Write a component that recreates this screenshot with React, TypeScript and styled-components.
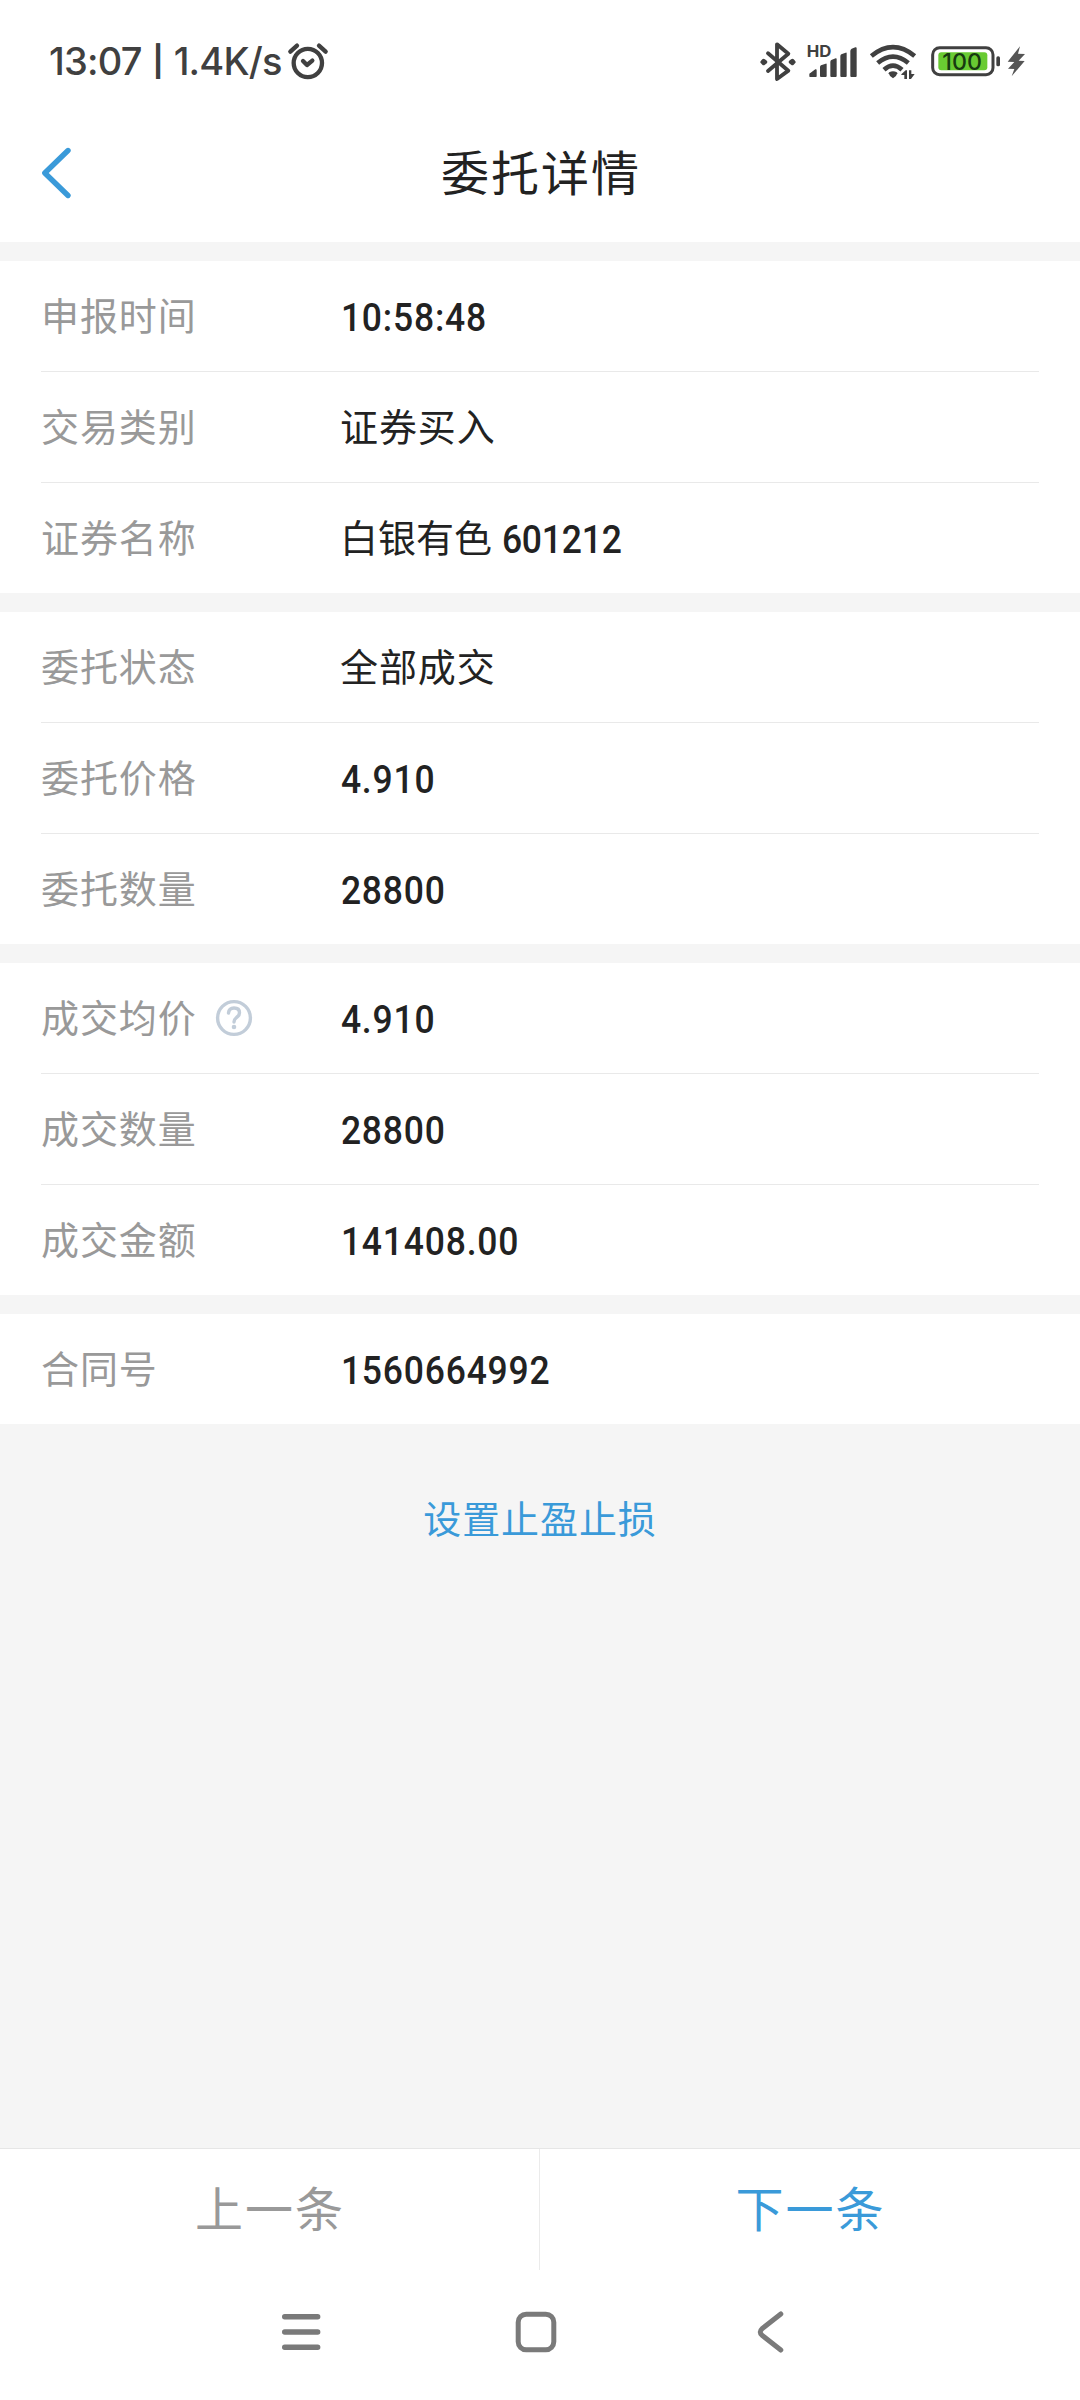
import React from "react";
import styled, { createGlobalStyle } from "styled-components";

const blue = "#3a9ad9";
const ink = "#404040";

const Global = createGlobalStyle`
  * { box-sizing: border-box; }
  body { margin: 0; background: #fff; }
`;

const Screen = styled.div`
  width: 1080px;
  height: 2400px;
  display: flex;
  flex-direction: column;
  background: #f5f5f5;
  font-family: "Noto Sans CJK SC", sans-serif;
  color: #222;
`;

const StatusBar = styled.header`
  height: 104px;
  padding: 18px 55px 0 49px;
  display: flex;
  align-items: center;
  background: #fff;
  color: ${ink};
`;

const Clock = styled.div`
  width: 239px;
  display: flex;
  align-items: center;
  font: 500 38px/44px Inter, sans-serif;
  letter-spacing: -0.8px;
`;

const Divider = styled.span`
  width: 32px;
  font-size: 30px;
  font-weight: 700;
  line-height: 44px;
  text-align: center;
`;

const Spacer = styled.div`
  flex: 1;
`;

const Glyph = styled.svg<{ $ml?: number; $mr?: number }>`
  display: block;
  flex: none;
  overflow: visible;
  margin-left: ${(p) => p.$ml ?? 0}px;
  margin-right: ${(p) => p.$mr ?? 0}px;
`;

const TitleBar = styled.div`
  height: 138px;
  display: grid;
  grid-template-columns: 1fr auto 1fr;
  align-items: center;
  padding: 0 41px;
  background: #fff;
`;

const BackButton = styled.button`
  display: flex;
  padding: 0;
  border: 0;
  background: none;
`;

const Title = styled.h1`
  margin: 0;
  padding: 0 0 6px 2px;
  font-size: 48px;
  font-weight: 400;
  line-height: 60px;
  letter-spacing: 2px;
`;

const Group = styled.section`
  margin-top: 19px;
  padding: 0 41px;
  background: #fff;
`;

const Row = styled.div`
  display: flex;
  align-items: center;
  height: 110px;
  & + & {
    height: 111px;
    border-top: 1px solid #e9e9e9;
  }
`;

const Label = styled.div`
  width: 299px;
  display: flex;
  align-items: center;
  font-size: 38px;
  line-height: 50px;
  letter-spacing: 0.9px;
  color: #999;
`;

const Words = styled.span`
  padding-bottom: 4px;
`;

const Value = styled.div<{ $tight?: boolean }>`
  display: flex;
  align-items: center;
  gap: 9px;
  font-size: 38px;
  line-height: 50px;
  letter-spacing: ${(p) => (p.$tight ? 0 : 0.9)}px;
`;

const Figure = styled.span<{ $tight?: boolean }>`
  display: inline-block;
  padding: 3px 0 0 1px;
  font: 500 39.4px/50px Roboto, sans-serif;
  letter-spacing: ${(p) => (p.$tight ? -0.2 : 0.9)}px;
  transform: scaleX(0.9);
  transform-origin: left center;
`;

const LinkButton = styled.button`
  align-self: center;
  margin-top: 67px;
  padding: 0;
  border: 0;
  background: none;
  color: ${blue};
  font: 400 38px/52px "Noto Sans CJK SC", sans-serif;
  letter-spacing: 0.9px;
`;

const Pager = styled.footer`
  height: 122px;
  margin-top: auto;
  display: flex;
  border-top: 1px solid #e6e6e6;
  background: #fff;
`;

const PagerButton = styled.button<{ $active?: boolean }>`
  width: 50%;
  padding: 0 0 7px 1px;
  border: 0;
  background: none;
  color: ${(p) => (p.$active ? blue : "#999")};
  font: 400 48px/60px "Noto Sans CJK SC", sans-serif;
  letter-spacing: 2px;
  &:first-child {
    border-right: 1px solid #ebebeb;
  }
`;

const SystemNav = styled.nav`
  height: 130px;
  padding: 0 295px 6px 280px;
  display: flex;
  align-items: center;
  justify-content: space-between;
  background: #fff;
`;

const AlarmIcon = () => (
  <Glyph width="40" height="37" viewBox="866 67 120 111" fill="none" stroke={ink} strokeWidth="13" strokeLinecap="round" strokeLinejoin="round">
    <circle cx="925.500" cy="127" r="42.500" />
    <path d="M873 93L893 75M979 93L959 75M911 121L923 133L939 120" />
  </Glyph>
);

const BluetoothIcon = () => (
  <Glyph width="36" height="39" viewBox="60 63 108 117" fill="none" stroke={ink} strokeWidth="11.500" strokeLinecap="round" strokeLinejoin="round">
    <path d="M84 97L145 149L111 174V70L145 98L84 150" />
    <path d="M67 123L71 119L76 123L71 127ZM152 123L157 119L161 123L157 127Z" />
  </Glyph>
);

const SignalIcon = () => (
  <Glyph $ml={11} width="51" height="48" viewBox="201 50 153 144" fill={ink}>
    <path d="M208 168V160L226 147Q230 145 230 150V168Q230 170 228 170H210Q208 170 208 168ZM240 140Q240 137 243 135L257 130Q260 129 260 132V167Q260 170 257 170H243Q240 170 240 167ZM271 125Q271 121 274 119L287 114Q290 113 290 117V167Q290 170 287 170H274Q271 170 271 167ZM301 108Q301 104 304 102L317 97Q320 96 320 99V167Q320 170 317 170H304Q301 170 301 167ZM331 92Q331 87 335 85L346 81Q350 80 350 84V167Q350 170 347 170H334Q331 170 331 167Z" />
    <text x="200" y="110" textLength="74" lengthAdjust="spacingAndGlyphs" fontFamily="Inter, sans-serif" fontWeight="700" fontSize="47">HD</text>
  </Glyph>
);

const WifiIcon = () => (
  <Glyph $ml={12} width="46" height="40" viewBox="390 62 138 120" fill="none" stroke={ink} strokeWidth="14">
    <path d="M394 107Q459 54 524 107M413 128Q459 90 505 128M432 148Q459 124 486 148" />
    <path d="M459 153Q472 154 472 159Q470 168 459 174Q448 168 446 159Q446 154 459 153Z" fill={ink} stroke="none" />
    <path d="M484 162L497 150H501V176H493V164H484ZM507 150H514V161H524L513 176H507Z" fill={ink} stroke="none" />
  </Glyph>
);

const BatteryIcon = () => (
  <Glyph $ml={15} width="70" height="31" viewBox="572 77 210 93">
    <rect x="577" y="82" width="181" height="81" rx="21" fill="none" stroke={ink} strokeWidth="9" />
    <rect x="594" y="96" width="147" height="54" rx="9" fill="#69cb32" />
    <rect x="768" y="108" width="11" height="30" rx="5" fill={ink} />
    <text x="606" y="149" textLength="119" lengthAdjust="spacingAndGlyphs" fontFamily="Inter, sans-serif" fontWeight="450" fontSize="70" fill="#173b10">100</text>
  </Glyph>
);

const BoltIcon = () => (
  <Glyph $ml={6} width="18" height="31" viewBox="801 77 54 93" fill="#555">
    <path d="M840 78L803 124L823 125L804 145L823 146L815 168L854 122L836 121L855 101L834 100Z" />
  </Glyph>
);

const BackIcon = () => (
  <Glyph width="30" height="52" viewBox="0 0 30 52" fill="none" stroke={blue} strokeWidth="5.400" strokeLinecap="round" strokeLinejoin="round">
    <path d="M27 3.500L3.800 26L27 48.500" />
  </Glyph>
);

const HelpIcon = () => (
  <Glyph $ml={18} width="38" height="38" viewBox="0 0 38 38" fill="none" stroke="#c2cdd9" strokeWidth="3.400">
    <circle cx="19" cy="19" r="16.400" />
    <path d="M13.500 14Q14 9 19 9Q24.500 9 24.500 13.700Q24.500 16.500 21.500 18.500Q19 20.500 19 23" strokeLinecap="round" />
    <circle cx="19" cy="28" r="2.300" fill="#c2cdd9" stroke="none" />
  </Glyph>
);

const MenuIcon = () => (
  <Glyph width="42" height="42" viewBox="0 0 42 42" stroke="#7a7a7a" strokeWidth="5.400" strokeLinecap="round">
    <path d="M4.700 5.700H37.700M4.700 21H37.700M4.700 36.300H37.700" />
  </Glyph>
);

const HomeIcon = () => (
  <Glyph $mr={7} width="42" height="42" viewBox="0 0 42 42" fill="none" stroke="#7a7a7a" strokeWidth="5">
    <rect x="3.200" y="3.200" width="35.600" height="35.600" rx="8" />
  </Glyph>
);

const NavBackIcon = () => (
  <Glyph width="28" height="42" viewBox="0 0 28 42" fill="none" stroke="#7a7a7a" strokeWidth="5" strokeLinecap="round" strokeLinejoin="round">
    <path d="M23.800 3L5 17.800Q1.500 21 5 24.200L23.800 39" />
  </Glyph>
);

type Item = { label: string; text?: string; figure?: string; help?: boolean };

const groups: Item[][] = [
  [
    { label: "申报时间", figure: "10:58:48" },
    { label: "交易类别", text: "证券买入" },
    { label: "证券名称", text: "白银有色", figure: "601212" },
  ],
  [
    { label: "委托状态", text: "全部成交" },
    { label: "委托价格", figure: "4.910" },
    { label: "委托数量", figure: "28800" },
  ],
  [
    { label: "成交均价", figure: "4.910", help: true },
    { label: "成交数量", figure: "28800" },
    { label: "成交金额", figure: "141408.00" },
  ],
  [{ label: "合同号", figure: "1560664992" }],
];

export default function App() {
  return (
    <Screen>
      <Global />
      <StatusBar>
        <Clock>
          <span>13:07</span>
          <Divider>|</Divider>
          <span>1.4K/s</span>
        </Clock>
        <AlarmIcon />
        <Spacer />
        <BluetoothIcon />
        <SignalIcon />
        <WifiIcon />
        <BatteryIcon />
        <BoltIcon />
      </StatusBar>
      <TitleBar>
        <BackButton aria-label="返回">
          <BackIcon />
        </BackButton>
        <Title>委托详情</Title>
      </TitleBar>
      {groups.map((items, i) => (
        <Group key={i}>
          {items.map((item) => {
            const tight = Boolean(item.text && item.figure);
            return (
              <Row key={item.label}>
                <Label>
                  <Words>{item.label}</Words>
                  {item.help && <HelpIcon />}
                </Label>
                <Value $tight={tight}>
                  {item.text && <Words>{item.text}</Words>}
                  {item.figure && <Figure $tight={tight}>{item.figure}</Figure>}
                </Value>
              </Row>
            );
          })}
        </Group>
      ))}
      <LinkButton>设置止盈止损</LinkButton>
      <Pager>
        <PagerButton>上一条</PagerButton>
        <PagerButton $active>下一条</PagerButton>
      </Pager>
      <SystemNav>
        <MenuIcon />
        <HomeIcon />
        <NavBackIcon />
      </SystemNav>
    </Screen>
  );
}
